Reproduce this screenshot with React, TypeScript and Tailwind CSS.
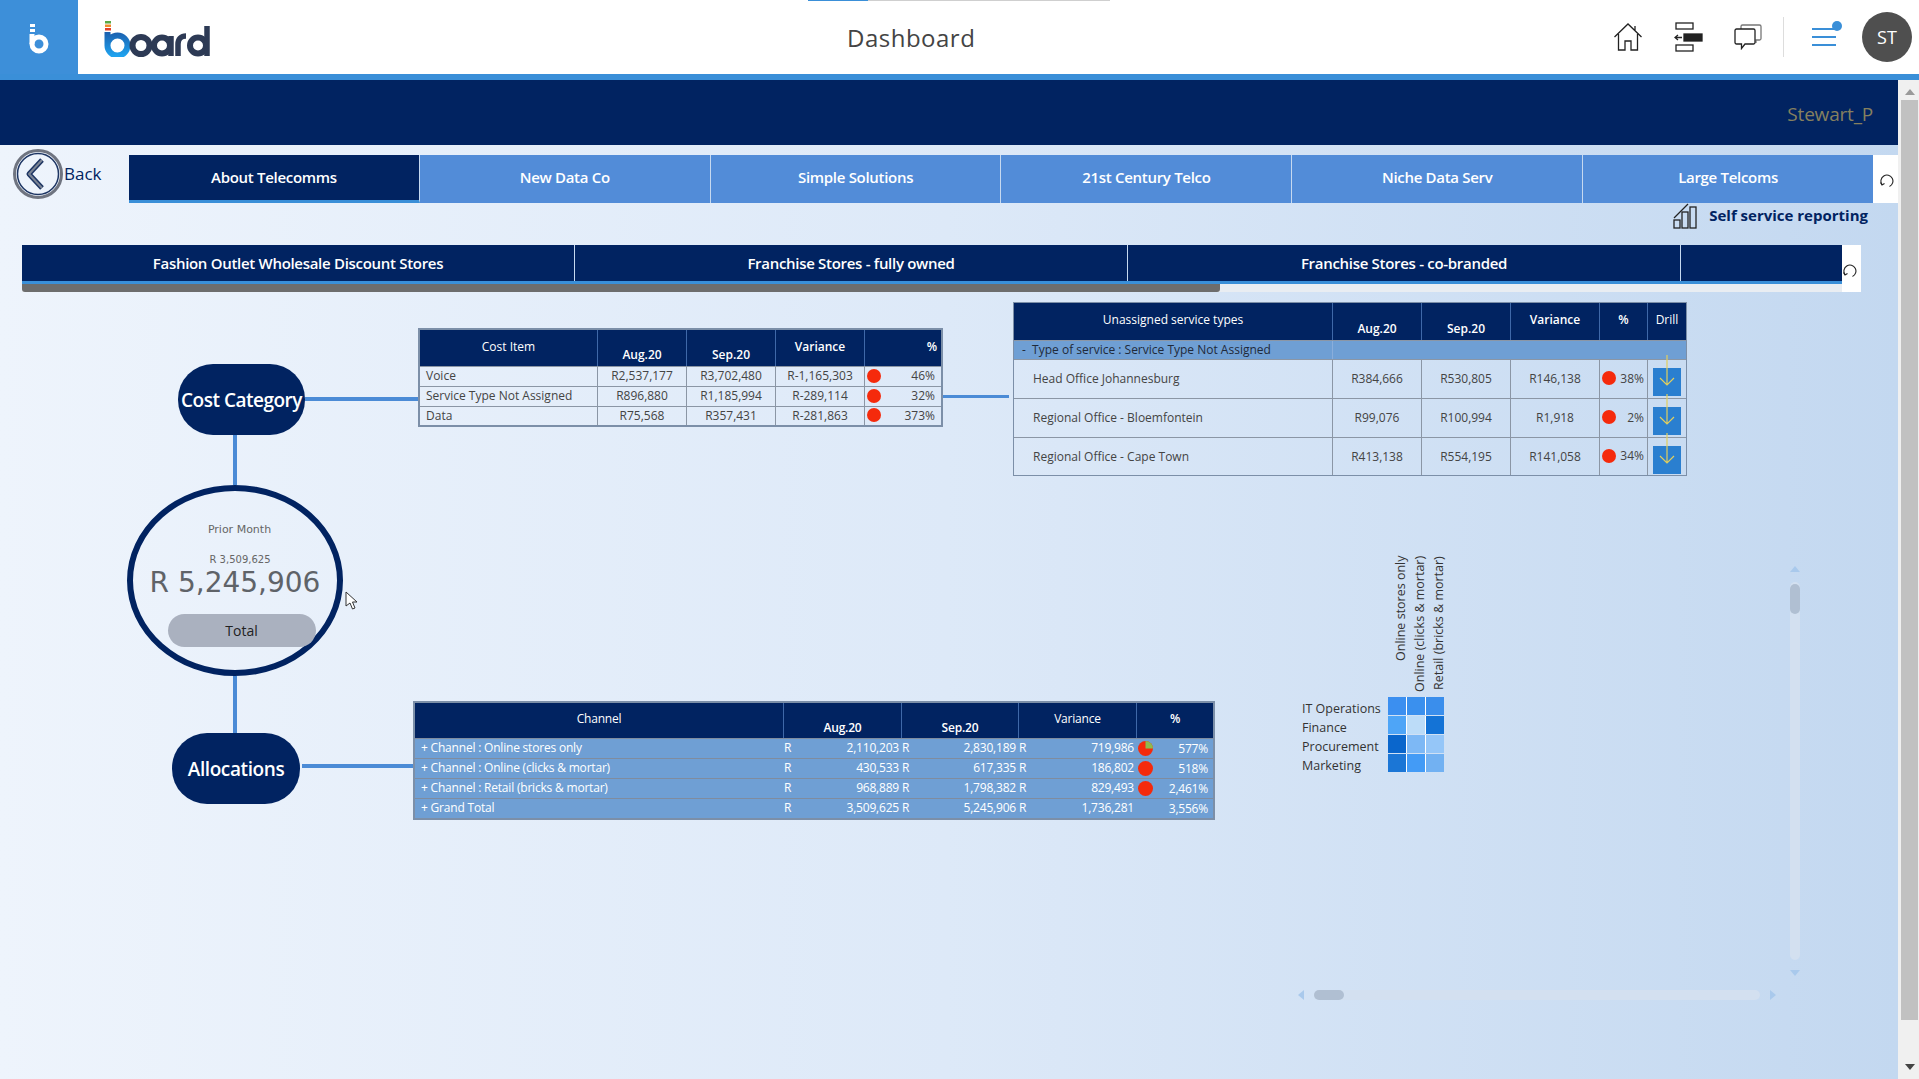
import { ReactNode } from 'react'

const sans = 'font-["Open_Sans",sans-serif]'

const topTabs = ['About Telecomms', 'New Data Co', 'Simple Solutions', '21st Century Telco', 'Niche Data Serv', 'Large Telcoms']
const subTabs = ['Fashion Outlet Wholesale Discount Stores', 'Franchise Stores - fully owned', 'Franchise Stores - co-branded']

const costRows = [
  ['Voice', 'R2,537,177', 'R3,702,480', 'R-1,165,303', '46%'],
  ['Service Type Not Assigned', 'R896,880', 'R1,185,994', 'R-289,114', '32%'],
  ['Data', 'R75,568', 'R357,431', 'R-281,863', '373%'],
]

const serviceRows = [
  ['Head Office Johannesburg', 'R384,666', 'R530,805', 'R146,138', '38%'],
  ['Regional Office - Bloemfontein', 'R99,076', 'R100,994', 'R1,918', '2%'],
  ['Regional Office - Cape Town', 'R413,138', 'R554,195', 'R141,058', '34%'],
]

const channelRows = [
  ['+ Channel : Online stores only', '2,110,203', '2,830,189', '719,986', '577%', 'pie'],
  ['+ Channel : Online (clicks & mortar)', '430,533', '617,335', '186,802', '518%', 'dot'],
  ['+ Channel : Retail (bricks & mortar)', '968,889', '1,798,382', '829,493', '2,461%', 'dot'],
  ['+ Grand Total', '3,509,625', '5,245,906', '1,736,281', '3,556%', ''],
]

const heatRows = [
  { label: 'IT Operations', cells: ['bg-[#3b8ff0]', 'bg-[#3a90ee]', 'bg-[#3a8eec]'] },
  { label: 'Finance', cells: ['bg-[#4ea5f7]', 'bg-[#bcdcf8]', 'bg-[#1473d6]'] },
  { label: 'Procurement', cells: ['bg-[#0a66cc]', 'bg-[#7db8f5]', 'bg-[#95c6f8]'] },
  { label: 'Marketing', cells: ['bg-[#1b76d6]', 'bg-[#439bf6]', 'bg-[#72b1f2]'] },
]

function Dot() {
  return <span className="h-[14px] w-[14px] shrink-0 rounded-full bg-[#f52a0c]" />
}

function Th({ className, children }: { className: string; children: ReactNode }) {
  return <div className={`flex border-r border-[#3f68a8] last:border-r-0 ${className}`}>{children}</div>
}

function ResetIcon() {
  return (
    <svg viewBox="0 0 14 14" className="h-[14px] w-[14px]" fill="none" stroke="#222" strokeWidth="1.100">
      <path d="M9.500 12.500A6 6 0 1 0 2 10.500" />
      <path d="M0.500 8.500L2 11l2.500-1.500" />
    </svg>
  )
}

function CostTable() {
  return (
    <div className={`w-[525px] border-2 border-[#7c8fa8] text-[12px] text-[#444] ${sans}`}>
      <div className="flex h-[36px] bg-[#012361] font-semibold text-white">
        <Th className="w-[178px] items-center justify-center pb-[2px] font-normal">Cost Item</Th>
        <Th className="w-[89px] items-end justify-center pb-[2px]">Aug.20</Th>
        <Th className="w-[89px] items-end justify-center pb-[2px]">Sep.20</Th>
        <Th className="w-[89px] items-center justify-center pb-[2px]">Variance</Th>
        <Th className="flex-1 items-center justify-end pb-[2px] pr-1">%</Th>
      </div>
      {costRows.map((row) => (
        <div key={row[0]} className="flex h-5 border-t border-[#8b96a5] leading-[17px] last:h-[19px]">
          <div className="w-[178px] border-r border-[#8b96a5] pl-[6px]">{row[0]}</div>
          <div className="w-[89px] border-r border-[#8b96a5] text-center">{row[1]}</div>
          <div className="w-[89px] border-r border-[#8b96a5] text-center">{row[2]}</div>
          <div className="w-[89px] border-r border-[#8b96a5] text-center">{row[3]}</div>
          <div className="flex flex-1 items-center justify-between pb-[2px] pl-[2px] pr-[6px]">
            <Dot />
            <span>{row[4]}</span>
          </div>
        </div>
      ))}
    </div>
  )
}

function DrillButton() {
  return (
    <div className="relative mt-[8px] flex h-[28px] w-[28px] items-center justify-center bg-[#2a7fd0]">
      <svg viewBox="0 0 28 38" className="absolute bottom-[3px] left-0 h-[38px] w-[28px]" fill="none" stroke="#e2cf5e" strokeWidth="1.200">
        <path d="M14 0V30M7 23l7 7 7-7" />
      </svg>
    </div>
  )
}

function ServiceTable() {
  return (
    <div className={`w-[674px] border border-[#7c8fa8] text-[12px] text-[#444] ${sans}`}>
      <div className="flex h-[37px] bg-[#012361] font-semibold text-white">
        <Th className="w-[319px] items-center justify-center pb-1 font-normal">Unassigned service types</Th>
        <Th className="w-[89px] items-end justify-center pb-[2px]">Aug.20</Th>
        <Th className="w-[89px] items-end justify-center pb-[2px]">Sep.20</Th>
        <Th className="w-[89px] items-center justify-center pb-1">Variance</Th>
        <Th className="w-[48px] items-center justify-center pb-1">%</Th>
        <Th className="flex-1 items-center justify-center pb-1 font-normal">Drill</Th>
      </div>
      <div className="flex h-[20px] border-y border-[#8b96a5] bg-[#6f9fd4] leading-[17px] text-[#1f2a3a]">
        <div className="w-[319px] border-r border-[#8aaedb] pl-2">-&nbsp; Type of service : Service Type Not Assigned</div>
      </div>
      {serviceRows.map((row) => (
        <div key={row[0]} className="flex h-[39px] border-b border-[#8b96a5] leading-[37px] last:h-[37px] last:border-b-0">
          <div className="w-[319px] border-r border-[#8b96a5] pl-[19px]">{row[0]}</div>
          <div className="w-[89px] border-r border-[#8b96a5] text-center">{row[1]}</div>
          <div className="w-[89px] border-r border-[#8b96a5] text-center">{row[2]}</div>
          <div className="w-[89px] border-r border-[#8b96a5] text-center">{row[3]}</div>
          <div className="flex w-[48px] items-center justify-between border-r border-[#8b96a5] pb-[2px] pl-[2px] pr-[3px]">
            <Dot />
            <span>{row[4]}</span>
          </div>
          <div className="flex flex-1 justify-center">
            <DrillButton />
          </div>
        </div>
      ))}
    </div>
  )
}

function PieMark() {
  return (
    <svg viewBox="0 0 14 14" className="h-[15px] w-[15px] shrink-0">
      <circle cx="7" cy="7" r="7" fill="#f52a0c" />
      <path d="M7 7V0A7 7 0 0 1 14 7Z" fill="#8dbb4f" />
    </svg>
  )
}

function ChannelTable() {
  return (
    <div className={`w-[802px] border-2 border-[#7c8fa8] text-[12px] font-semibold tracking-[-0.2px] text-white ${sans}`}>
      <div className="flex h-[35px] bg-[#012361]">
        <Th className="w-[369px] items-center justify-center pb-1 font-normal">Channel</Th>
        <Th className="w-[118px] items-end justify-center pb-[1px]">Aug.20</Th>
        <Th className="w-[117px] items-end justify-center pb-[1px]">Sep.20</Th>
        <Th className="w-[118px] items-center justify-center pb-1 font-normal">Variance</Th>
        <Th className="flex-1 items-center justify-center pb-1">%</Th>
      </div>
      {channelRows.map((row) => (
        <div key={row[0]} className="flex h-5 border-t border-[#7f8c9f] bg-[#6f9fd4] font-normal leading-[18px]">
          <div className="w-[369px] truncate pl-[6px]">{row[0]}</div>
          <div className="flex w-[118px] justify-between pr-[3px]">
            <span>R</span>
            <span>{row[1]}</span>
          </div>
          <div className="flex w-[117px] justify-between pr-[3px]">
            <span>R</span>
            <span>{row[2]}</span>
          </div>
          <div className="flex w-[118px] justify-between pr-[3px]">
            <span>R</span>
            <span>{row[3]}</span>
          </div>
          <div className="flex flex-1 items-center justify-between pl-[1px] pr-[5px]">
            {row[5] === 'pie' ? <PieMark /> : row[5] === 'dot' ? <span className="h-[15px] w-[15px] rounded-full bg-[#f52a0c]" /> : <span />}
            <span>{row[4]}</span>
          </div>
        </div>
      ))}
    </div>
  )
}

function HeatMap() {
  return (
    <div className={`text-[12.5px] leading-[18.7px] text-[#333] ${sans}`}>
      <div className="ml-[90px] flex h-[136px] items-start gap-[1px]">
        {['Online stores only', 'Online (clicks & mortar)', 'Retail (bricks & mortar)'].map((label, i) => (
          <div key={label} className={`flex h-[136px] w-[18px] justify-center ${i === 0 ? 'pb-[29px]' : ''}`}>
            <span className="rotate-180 whitespace-nowrap text-right text-[12.5px] leading-[18px] [writing-mode:vertical-rl]">{label}</span>
          </div>
        ))}
      </div>
      <div className="mt-[5px] flex flex-col">
        {heatRows.map((row) => (
          <div key={row.label} className="flex h-[19px] items-start">
            <span className="w-[86px] pt-[3px]">{row.label}</span>
            <div className="flex gap-[1px] bg-white">
              {row.cells.map((c, i) => (
                <span key={i} className={`h-[18px] w-[18px] ${c}`} />
              ))}
            </div>
          </div>
        ))}
      </div>
    </div>
  )
}

function Diagram() {
  return (
    <div className={`relative h-[560px] w-[413px] shrink-0 ${sans}`}>
      {/* nodes of the diagram and their connecting lines */}
      <div className="absolute left-[233px] top-[143px] h-[50px] w-[4px] bg-[#4b8bd6]" />
      <div className="absolute left-[233px] top-[384px] h-[58px] w-[4px] bg-[#4b8bd6]" />
      <div className="absolute left-[305px] top-[105px] h-[4px] w-[113px] bg-[#4b8bd6]" />
      <div className="absolute left-[302px] top-[472px] h-[4px] w-[111px] bg-[#4b8bd6]" />
      <div className="absolute left-[178px] top-[72px] flex h-[71px] w-[127px] items-center justify-center whitespace-nowrap rounded-[35px] bg-[#012361] pt-[2px] text-[19px] font-semibold tracking-[-0.5px] text-white">
        Cost Category
      </div>
      <div className="absolute left-[172px] top-[441px] flex h-[71px] w-[128px] items-center justify-center rounded-[35px] bg-[#012361] pt-[2px] text-[19px] font-semibold tracking-[-0.4px] text-white">
        Allocations
      </div>
      <div className="absolute left-[127px] top-[193px] flex h-[191px] w-[216px] flex-col items-center rounded-[50%] border-[6px] border-[#012361]">
        <span className="ml-[9px] mt-[31px] font-['DejaVu_Sans',sans-serif] text-[11px] text-[#666]">Prior Month</span>
        <span className="ml-[10px] mt-[13px] font-['DejaVu_Sans',sans-serif] text-[10px] text-[#666]">R 3,509,625</span>
        <span className="mt-[1px] font-['DejaVu_Sans',sans-serif] text-[28px] leading-[30px] text-[#5f6368]">R 5,245,906</span>
        <span className="ml-[13px] mt-[16px] flex h-[33px] w-[148px] items-center justify-center rounded-full bg-[#aab1bf] text-[14px] text-[#222]">Total</span>
      </div>
      {/* mouse pointer */}
      <svg viewBox="0 0 12 20" className="absolute left-[345px] top-[299px] h-[20px] w-[12px]" fill="#fff" stroke="#333" strokeWidth="1">
        <path d="M1 1v14l4-3 2.500 6 2.500-1-2.500-6h4.500Z" />
      </svg>
    </div>
  )
}

function ScrollBar() {
  return (
    <div className="flex w-[21px] shrink-0 flex-col items-center bg-[#f0f0f0] pl-[2px]">
      <svg viewBox="0 0 10 6" className="mt-[9px] h-[6px] w-[10px]" fill="#9a9a9a">
        <path d="M5 0l5 6H0Z" />
      </svg>
      <div className="mt-[5px] h-[920px] w-[17px] bg-[#c1c1c1]" />
      <svg viewBox="0 0 10 6" className="mt-[44px] h-[6px] w-[10px]" fill="#444">
        <path d="M0 0h10L5 6Z" />
      </svg>
    </div>
  )
}

function BackButton() {
  return (
    <svg viewBox="0 0 50 50" className="h-[50px] w-[50px] shrink-0" fill="none">
      <circle cx="25" cy="25" r="23.500" stroke="#6f7480" strokeWidth="3" />
      <circle cx="25" cy="25" r="20.500" stroke="#1d3563" strokeWidth="1.500" />
      <path d="M29 11L16 25l13 14" stroke="#1d3563" strokeWidth="5" strokeLinejoin="round" />
      <path d="M29 11L16 25l13 14" stroke="#7c8595" strokeWidth="2" strokeLinejoin="round" />
    </svg>
  )
}

export default function App() {
  return (
    <div className={`flex h-[1079px] w-[1919px] flex-col overflow-hidden bg-white ${sans}`}>
      {/* Header */}
      <header className="relative flex h-[80px] shrink-0 border-b-[6px] border-[#3a8fd8] bg-white">
        <div className="absolute left-[808px] top-0 h-[1px] w-[60px] bg-[#3a8fd8]" />
        <div className="absolute left-[868px] top-0 h-[1px] w-[242px] bg-[#cfcfcf]" />
        <div className="flex w-[78px] items-center justify-center bg-[#3d8fd9] pt-[4px]">
          <svg viewBox="0 0 20 32" className="h-[32px] w-[20px]" fill="none">
            <rect x="1" y="1" width="5" height="3" fill="#fff" />
            <rect x="1" y="6" width="5" height="3" fill="#fff" />
            <circle cx="10" cy="21" r="7" stroke="#fff" strokeWidth="5" />
            <path d="M3 11V21" stroke="#fff" strokeWidth="5" />
          </svg>
        </div>
        <div className="ml-[26px] flex items-center pt-[3px]">
          <svg viewBox="0 0 106 36" className="h-[36px] w-[106px]" fill="none">
            <defs>
              <linearGradient id="boardB" x1="0" y1="0" x2="0" y2="1">
                <stop offset="0" stopColor="#1b5fae" />
                <stop offset="1" stopColor="#1fa2ee" />
              </linearGradient>
            </defs>
            <rect x="1" y="0" width="6" height="2.500" fill="#5aa845" />
            <rect x="1" y="3.500" width="6" height="2.500" fill="#ef8b2c" />
            <rect x="1" y="7" width="6" height="2.500" fill="#e2402c" />
            <path d="M3.500 11V24A10 10 0 1 0 13.500 14.500A10 10 0 0 0 3.500 24Z" stroke="url(#boardB)" strokeWidth="6" />
            <circle cx="37" cy="24.500" r="8.500" stroke="#2d3a55" strokeWidth="6" />
            <circle cx="58" cy="24.500" r="8" stroke="#2d3a55" strokeWidth="6" />
            <path d="M67 15V35" stroke="#2d3a55" strokeWidth="5.500" />
            <path d="M74 35V23c0-5 3-8 8-8" stroke="#2d3a55" strokeWidth="5.500" />
            <circle cx="94" cy="24.500" r="8" stroke="#2d3a55" strokeWidth="6" />
            <path d="M103 5V35" stroke="#2d3a55" strokeWidth="5.500" />
          </svg>
        </div>
        <div className="absolute left-[847px] top-[22px] text-[24px] leading-[32px] tracking-[0.5px] text-[#444]">Dashboard</div>
        <div className="ml-auto flex items-center pr-[7px]">
          <svg viewBox="0 0 28 28" className="h-[28px] w-[28px]" fill="none" stroke="#222" strokeWidth="1.300">
            <path d="M0.500 14L14 1l13.500 13M4.500 11v16h6.500v-9h6v9h6.500V11M21 8V3" />
          </svg>
          <svg viewBox="0 0 30 30" className="ml-[32px] h-[30px] w-[30px]" fill="none" stroke="#222" strokeWidth="1.300">
            <rect x="2" y="1" width="17" height="6" />
            <rect x="2" y="23" width="17" height="6" />
            <rect x="10" y="12" width="18" height="7" fill="#222" />
            <path d="M8 15.500H1M4 13l-3 2.500L4 18" />
          </svg>
          <svg viewBox="0 0 28 26" className="ml-[30px] h-[26px] w-[28px]" fill="none" strokeWidth="1.300">
            <path d="M7 5V2.500A1.500 1.500 0 0 1 8.500 1h17A1.500 1.500 0 0 1 27 2.500v12a1.500 1.500 0 0 1-1.500 1.500H22v3" stroke="#777" />
            <path d="M2.500 5h17A1.500 1.500 0 0 1 21 6.500v12a1.500 1.500 0 0 1-1.500 1.500H11l-3.500 4.500V20h-5A1.500 1.500 0 0 1 1 18.500v-12A1.500 1.500 0 0 1 2.500 5Z" stroke="#222" />
          </svg>
          <div className="ml-[21px] h-[40px] w-px bg-[#ddd]" />
          <div className="relative ml-[28px] flex h-[18px] w-[24px] flex-col justify-between">
            <span className="h-[2px] bg-[#3a8fd8]" />
            <span className="h-[2px] bg-[#3a8fd8]" />
            <span className="h-[2px] bg-[#3a8fd8]" />
            <span className="absolute -right-[6px] -top-[7px] h-[10px] w-[10px] rounded-full bg-[#3a8fd8]" />
          </div>
          <div className="ml-[26px] flex h-[50px] w-[50px] items-center justify-center rounded-full bg-[#4f4f4f] text-[18px] text-white">ST</div>
        </div>
      </header>

      <div className="flex min-h-0 flex-1">
        <main className="flex min-w-0 flex-1 flex-col bg-gradient-to-r from-[#eef4fc] via-[#dde9f8] to-[#c3d8f0]">
          <div className="flex h-[65px] shrink-0 items-center justify-end bg-[#012361] pr-[25px] pt-[3px]">
            <span className="text-[19px] tracking-[-0.2px] text-[#86805f]">Stewart_P</span>
          </div>

          {/* Top tabs */}
          <div className="mt-[10px] flex h-[48px] shrink-0 items-start pl-[13px]">
            <div className="-mt-[6px] flex h-[50px] w-[116px] shrink-0 items-start">
              <BackButton />
              <span className="ml-[1px] mt-[13px] text-[17px] leading-[24px] text-[#012361]">Back</span>
            </div>
            <div className="flex w-[1744px]">
              {topTabs.map((tab, i) => (
                <div
                  key={tab}
                  className={`flex h-[48px] flex-1 items-center justify-center border-r border-[#c6d9f0] text-[15px] font-semibold tracking-[-0.3px] text-white last:border-r-0 ${
                    i === 0 ? 'border-b-[3px] border-b-[#3a8fd8] bg-[#012361]' : 'bg-[#528cd8] pb-[3px]'
                  }`}
                >
                  {tab}
                </div>
              ))}
            </div>
            <div className="flex h-[48px] w-[25px] items-center justify-center bg-white pl-[3px] pt-[4px]">
              <ResetIcon />
            </div>
          </div>

          <div className="flex h-[42px] shrink-0 items-start justify-end pr-[30px]">
            <svg viewBox="0 0 24 26" className="h-[26px] w-[24px]" fill="none" stroke="#222" strokeWidth="1.300">
              <rect x="1" y="17" width="6" height="8" />
              <rect x="9" y="9" width="6" height="16" />
              <rect x="17" y="4" width="6" height="21" />
              <path d="M1 15L15 1" />
            </svg>
            <span className="ml-[12px] mt-[2px] text-[15px] font-bold leading-[20px] text-[#012361]">Self service reporting</span>
          </div>

          {/* Sub tabs */}
          <div className="ml-[22px] flex h-[47px] w-[1839px] shrink-0">
            <div className="flex w-[1820px] flex-col">
              <div className="flex h-[39px] border-b-[3px] border-[#3a8fd8] bg-[#012361]">
                {subTabs.map((tab) => (
                  <div key={tab} className="flex w-[553px] items-center justify-center border-r border-[#c6d9f0] text-[15px] font-semibold tracking-[-0.3px] text-white">
                    {tab}
                  </div>
                ))}
              </div>
              <div className="h-[8px] bg-[#e9edf2]">
                <div className="h-[8px] w-[1198px] rounded-b-[3px] bg-[#6d6d6d]" />
              </div>
            </div>
            <div className="flex w-[19px] items-start justify-start bg-white pl-[1px] pt-[19px]">
              <ResetIcon />
            </div>
          </div>

          {/* Canvas */}
          <div className="flex min-h-0 flex-1">
            <Diagram />
            <div className="flex min-w-0 flex-1 flex-col">
              <div className="flex items-start">
                <div className="ml-[5px] mt-[36px]">
                  <CostTable />
                </div>
                <div className="mt-[103px] h-[3px] w-[66px] bg-[#4b8bd6]" />
                <div className="ml-[4px] mt-[10px]">
                  <ServiceTable />
                </div>
              </div>
              <div className="mt-[225px] flex items-start">
                <ChannelTable />
                <div className="-mt-[145px] ml-[87px]">
                  <HeatMap />
                </div>
              </div>
            </div>
            {/* Inner scrollbars of the matrix widget */}
            <div className="relative w-0">
              <div className="absolute -left-[109px] top-[274px] flex h-[410px] w-[12px] flex-col items-center">
                <span className="h-0 w-0 border-x-[5px] border-b-[6px] border-x-transparent border-b-[#a9c9ec]" />
                <div className="mt-[10px] flex w-[10px] flex-1 flex-col rounded-full bg-[#d3e0f0]">
                  <span className="mt-[2px] h-[30px] rounded-full bg-[#b0bfd2]" />
                </div>
                <span className="mt-[10px] h-0 w-0 border-x-[5px] border-t-[6px] border-x-transparent border-t-[#a9c9ec]" />
              </div>
              <div className="absolute -left-[600px] top-[697px] flex h-[12px] w-[478px] items-center">
                <span className="h-0 w-0 border-y-[5px] border-r-[6px] border-y-transparent border-r-[#a9c9ec]" />
                <div className="mx-[10px] flex h-[10px] flex-1 rounded-full bg-[#d3e0f0]">
                  <span className="w-[30px] rounded-full bg-[#b0bfd2]" />
                </div>
                <span className="h-0 w-0 border-y-[5px] border-l-[6px] border-y-transparent border-l-[#a9c9ec]" />
              </div>
            </div>
          </div>
        </main>
        <ScrollBar />
      </div>
    </div>
  )
}
